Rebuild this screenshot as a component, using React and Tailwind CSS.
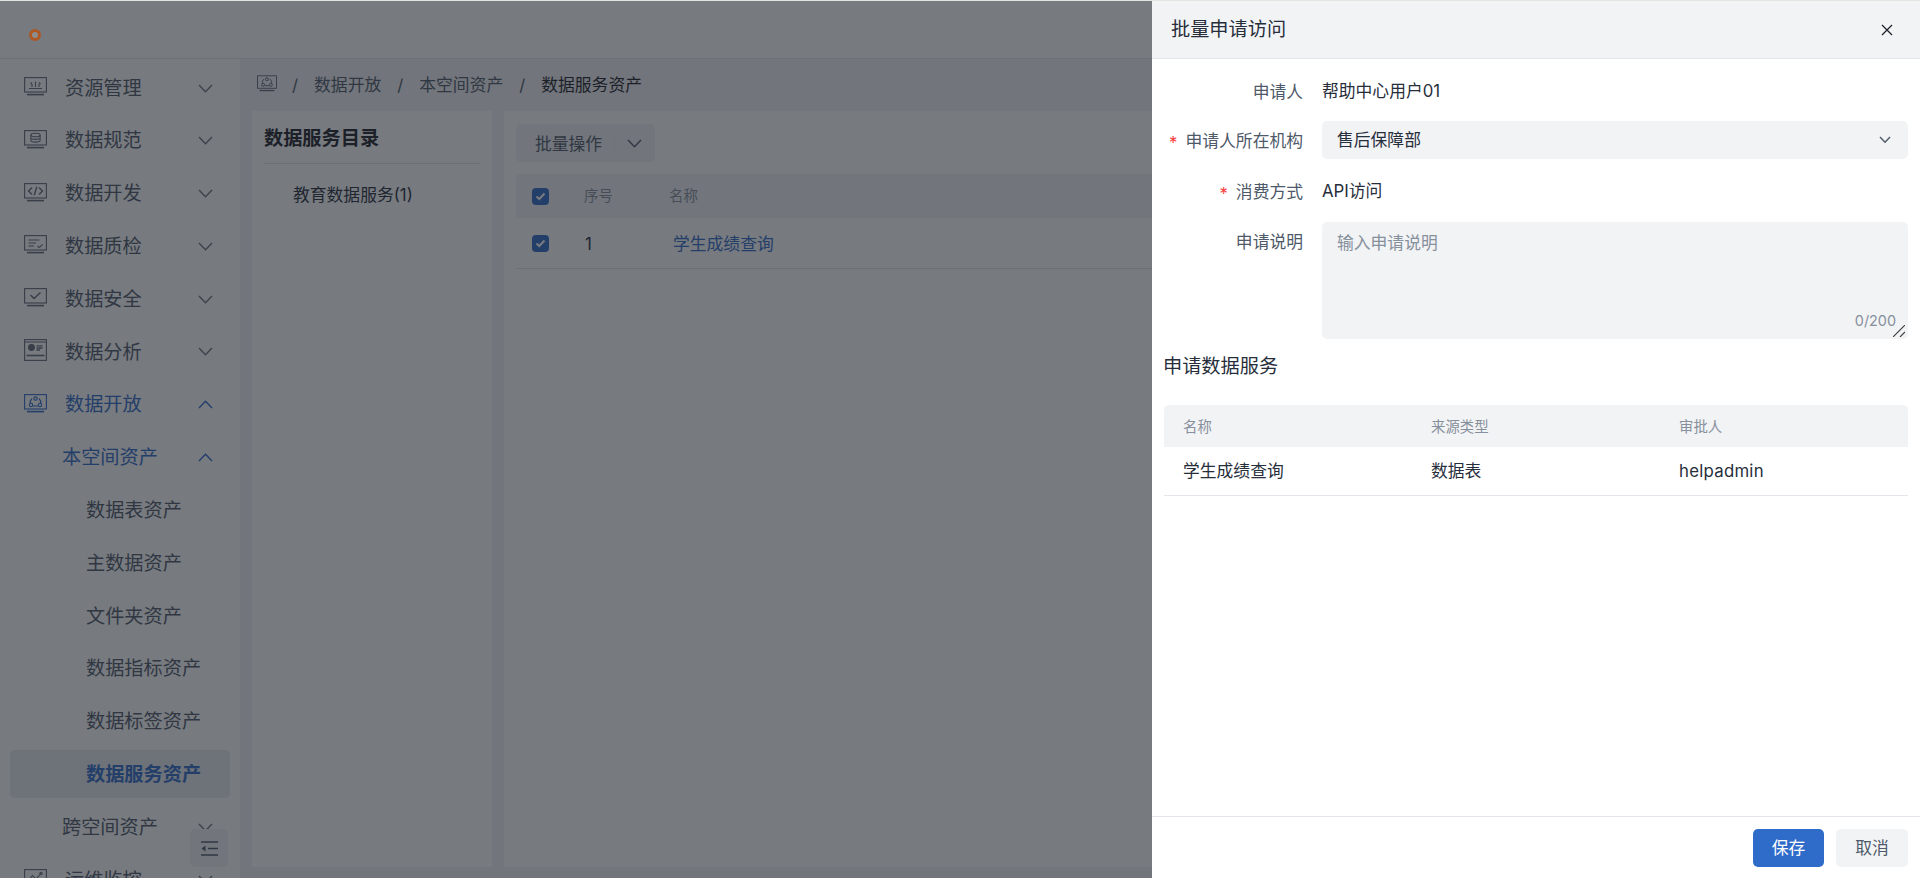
import React from "react";

const FONT = { fontFamily: 'Inter, "Noto Sans CJK SC", sans-serif' };

function Chevron({ up = false, w = 15, className = "" }) {
  const h = w / 2 + 1.5;
  const d = up ? `M1 ${h - 1} L${w / 2} 1.2 L${w - 1} ${h - 1}` : `M1 1 L${w / 2} ${h - 1.2} L${w - 1} 1`;
  return (
    <svg width={w} height={h} viewBox={`0 0 ${w} ${h}`} fill="none" stroke="currentColor" strokeWidth="1.4" className={className}>
      <path d={d} />
    </svg>
  );
}

function Screen({ children, className = "" }) {
  return (
    <svg width="23" height="19" viewBox="0 0 23 19" fill="none" stroke="currentColor" strokeWidth="1.1" className={className}>
      <rect x="0.6" y="0.6" width="21.8" height="14.4" />
      <path d="M3 17.6 H20" strokeWidth="1.6" />
      {children}
    </svg>
  );
}

function AnaIcon({ className = "" }) {
  return (
    <svg width="23" height="22" viewBox="0 0 23 22" fill="none" stroke="currentColor" strokeWidth="1.1" className={className}>
      <rect x="0.6" y="0.6" width="21.8" height="20.8" />
      <path d="M0.6 3 H22.4" strokeWidth="1" />
      <circle cx="7.5" cy="8.5" r="2.9" fill="currentColor" />
      <path d="M12.5 6.8 H18.5 M12.5 9 H18.5 M12.5 11 H16" strokeWidth="1.3" />
      <path d="M2.5 16.5 H20.5" strokeWidth="1.6" />
    </svg>
  );
}

const icons = {
  res: <path d="M5 11.5 H18 M8 10 V7 M11.5 10 V4.5 M15 10 V7 M6.5 7 L8 5.5 M16.5 7 L15 5.5" />,
  std: (
    <g>
      <ellipse cx="11.5" cy="5" rx="4.6" ry="1.8" />
      <path d="M6.9 5 V10.5 C6.9 12.6 16.1 12.6 16.1 10.5 V5 M6.9 7.8 C6.9 9.9 16.1 9.9 16.1 7.8" />
    </g>
  ),
  dev: <path d="M8 4.5 L4.5 8 L8 11.5 M15 4.5 L18.5 8 L15 11.5 M12.8 3.8 L10.2 12.2" strokeWidth="1.4" />,
  qa: <path d="M4.5 5 H15.5 M4.5 8 H12 M4.5 11 H10 M13.5 11 L15.2 12.6 L18.5 9.5" />,
  sec: <path d="M6.5 7 L10 10.5 L16.5 4.5" strokeWidth="1.5" />,
  open: (
    <g>
      <circle cx="11.5" cy="4.6" r="1.7" />
      <circle cx="7" cy="11" r="1.7" />
      <circle cx="16" cy="11" r="1.7" />
      <path d="M8 4.5 C6.5 6 6 7.5 6.3 9.4 M15 4.5 C16.5 6 17 7.5 16.7 9.4 M9 12 H14" />
    </g>
  ),
  ops: <path d="M3.5 12.5 L8.5 6.5 L12 10 L17 4.5 M17 4.5 m-1.2 0 a1.2 1.2 0 1 0 2.4 0 a1.2 1.2 0 1 0 -2.4 0" />,
};

function Row({ icon, label, open, active, indent, chevron = true, selected, strong }) {
  const iconClass = `ml-[14px] mr-[18px] shrink-0 ${active ? "text-[#2f6bc9]" : "text-[#626b78]"}`;
  return (
    <div
      className={`mx-[10px] h-[48px] shrink-0 rounded-[5px] flex items-center text-[19.2px] ${
        selected ? "bg-[#e9ebf0]" : ""
      } ${active ? "text-[#2f6bc9]" : "text-[#4e5969]"}`}
    >
      {icon === "ana" ? (
        <AnaIcon className={`${iconClass} -mt-[4px]`} />
      ) : icon ? (
        <Screen className={`${iconClass} -mt-[3px]`}>{icons[icon]}</Screen>
      ) : null}
      <span className={`${indent === 1 ? "ml-[52px]" : indent === 2 ? "ml-[76px]" : ""} ${strong ? "font-bold" : ""}`}>{label}</span>
      {chevron ? <Chevron up={open} className={`ml-auto mr-[17px] ${active ? "text-[#2f6bc9]" : "text-[#6b7480]"}`} /> : null}
    </div>
  );
}

function Box({ className = "" }) {
  return (
    <span className={`w-[17px] h-[17px] rounded-[4px] bg-[#2f6bc9] flex items-center justify-center shrink-0 ${className}`}>
      <svg width="11" height="9" viewBox="0 0 11 9" fill="none" stroke="white" strokeWidth="2">
        <path d="M1.5 4.5 L4.3 7 L9.5 1.5" />
      </svg>
    </span>
  );
}

function Label({ star, children, className = "" }) {
  return (
    <div className={`w-[139px] shrink-0 flex justify-end items-center text-[16.8px] text-[#4e5969] leading-[24px] ${className}`}>
      {star ? <span className="text-[#f53f3f] mr-[8px] mt-[3px]">*</span> : null}
      {children}
    </div>
  );
}

export default function App() {
  return (
    <div style={FONT} className="relative h-screen w-full overflow-hidden bg-white flex flex-col">
      <div className="h-px shrink-0 bg-[#e2e4e0]" />
      <header className="h-[58px] shrink-0 bg-white border-b border-[#e5e6eb] flex items-center pl-[29px]">
        <span className="relative z-50 w-[12px] h-[12px] mt-[11px] rounded-full bg-[#8c8e8d] border-[3px] border-[#ad5824]" />
      </header>
      <div className="flex-1 flex min-h-0">
        <aside className="relative w-[240px] shrink-0 bg-white overflow-hidden pt-[5px] flex flex-col gap-[4.8px]">
          <Row icon="res" label="资源管理" />
          <Row icon="std" label="数据规范" />
          <Row icon="dev" label="数据开发" />
          <Row icon="qa" label="数据质检" />
          <Row icon="sec" label="数据安全" />
          <Row icon="ana" label="数据分析" />
          <Row icon="open" label="数据开放" open active />
          <Row indent={1} label="本空间资产" open active />
          <Row indent={2} label="数据表资产" chevron={false} />
          <Row indent={2} label="主数据资产" chevron={false} />
          <Row indent={2} label="文件夹资产" chevron={false} />
          <Row indent={2} label="数据指标资产" chevron={false} />
          <Row indent={2} label="数据标签资产" chevron={false} />
          <Row indent={2} label="数据服务资产" chevron={false} selected active strong />
          <Row indent={1} label="跨空间资产" />
          <Row icon="ops" label="运维监控" />
          <div className="absolute left-[190px] bottom-[11px] w-[38px] h-[38px] rounded-[5px] bg-[#f2f3f5] flex items-center justify-center text-[#4e5969]">
            <svg width="17" height="15" viewBox="0 0 17 15" fill="none" stroke="currentColor" strokeWidth="1.6">
              <path d="M0 1 H17 M7 7.5 H17 M0 14 H17" />
              <path d="M4.5 4.5 L0.5 7.5 L4.5 10.5 Z" fill="currentColor" stroke="none" />
            </svg>
          </div>
        </aside>
        <main className="flex-1 min-w-0 bg-[#f2f3f5] flex flex-col">
          <nav className="h-[52px] shrink-0 flex items-center pl-[17px] pt-[2px] text-[16.8px] text-[#4e5969]">
            <Screen className="-mt-[6px] w-[20px] h-[17px] text-[#626b78]">{icons.open}</Screen>
            <span className="ml-[15px] mr-[16px]">/</span>
            <span>数据开放</span>
            <span className="mx-[16px]">/</span>
            <span>本空间资产</span>
            <span className="mx-[16px]">/</span>
            <span className="text-[#1d2129]">数据服务资产</span>
          </nav>
          <div className="flex-1 min-h-0 flex gap-[12px] pl-[12px] pr-[12px] pb-[11px]">
            <section className="w-[240px] shrink-0 bg-white px-[12px]">
              <div className="h-[53px] border-b border-[#e5e6eb] flex items-center pt-[2px] text-[19.2px] font-bold text-[#1d2129]">数据服务目录</div>
              <div className="mt-[19px] pl-[29px] text-[16.8px] leading-[24px] text-[#272e3b]">教育数据服务(1)</div>
            </section>
            <section className="flex-1 min-w-0 bg-white px-[12px] pt-[13px]">
              <div className="w-[139px] h-[38px] rounded-[5px] bg-[#f2f3f5] flex items-center pl-[19px] text-[16.8px] text-[#4e5969]">
                <span className="pt-[3px]">批量操作</span>
                <span className="w-px h-[22px] bg-[#eceef1] ml-[12px]" />
                <Chevron w={15} className="ml-[12px] text-[#4e5969]" />
              </div>
              <div className="mt-[12px] h-[44px] rounded-t-[5px] bg-[#f2f3f5] flex items-center pl-[16px] text-[14.4px] text-[#86909c]">
                <Box />
                <span className="ml-[35px] w-[85px]">序号</span>
                <span>名称</span>
              </div>
              <div className="h-[51px] border-b border-[#e5e6eb] flex items-center pl-[16px] text-[16.8px]">
                <Box className="mt-[1px]" />
                <span className="ml-[36px] w-[88px] pt-[4px] text-[#272e3b]">1</span>
                <span className="pt-[4px] text-[#2f6bc9]">学生成绩查询</span>
              </div>
            </section>
          </div>
        </main>
      </div>

      <div className="absolute inset-x-0 bottom-0 top-px bg-[rgba(29,33,41,0.6)]" />

      <aside className="absolute right-0 bottom-0 top-px w-[768px] bg-white flex flex-col">
        <div className="h-[58px] shrink-0 bg-[#f2f3f5] border-b border-[#e5e6eb] flex items-center pl-[19px] pr-[27px] text-[19.2px] text-[#272e3b]">
          <span>批量申请访问</span>
          <svg className="ml-auto" width="12" height="12" viewBox="0 0 12 12" fill="none" stroke="#1d2129" strokeWidth="1.3">
            <path d="M1 1 L11 11 M11 1 L1 11" />
          </svg>
        </div>
        <div className="flex-1 min-h-0 pl-[12px] pr-[12px] pt-[14px] flex flex-col">
          <div className="flex items-center h-[38px]">
            <Label>申请人</Label>
            <span className="ml-[19px] text-[16.8px] text-[#272e3b]">帮助中心用户01</span>
          </div>
          <div className="flex items-center h-[38px] mt-[10px]">
            <Label star className="pt-[2px]">申请人所在机构</Label>
            <div className="ml-[19px] flex-1 h-[38px] rounded-[5px] bg-[#f2f3f5] flex items-center pl-[15px] pr-[17px] text-[16.8px] text-[#272e3b]">
              <span className="pt-[2px]">售后保障部</span>
              <Chevron w={12} className="ml-auto text-[#4e5969]" />
            </div>
          </div>
          <div className="flex items-center h-[38px] mt-[14px]">
            <Label star>消费方式</Label>
            <span className="ml-[19px] text-[16.8px] text-[#272e3b]">API访问</span>
          </div>
          <div className="flex items-start mt-[11px]">
            <div className="pt-[8px]">
              <Label>申请说明</Label>
            </div>
            <div className="relative ml-[19px] flex-1 h-[117px]">
              <textarea
                readOnly
                placeholder="输入申请说明"
                style={FONT}
                className="block w-full h-full resize-none rounded-[5px] bg-[#f2f3f5] px-[15px] pt-[9px] pb-[7px] text-[16.8px] leading-[24px] placeholder:text-[#86909c] outline-none"
              />
              <span className="absolute right-[12px] bottom-[9px] text-[14.4px] leading-[18px] text-[#86909c]">0/200</span>
              <svg className="absolute right-[3px] bottom-[2px]" width="12" height="12" viewBox="0 0 12 12" fill="none" stroke="#3a3a3a" strokeWidth="1.1">
                <path d="M0 12 L12 0 M7 12 L12 7" />
              </svg>
            </div>
          </div>
          <div className="mt-[13px] -ml-px text-[19.2px] leading-[28px] text-[#272e3b]">申请数据服务</div>
          <div className="mt-[25px] h-[42px] rounded-t-[5px] bg-[#f2f3f5] grid grid-cols-3 items-center pt-[1px] text-[14.4px] text-[#86909c]">
            <span className="pl-[19px]">名称</span>
            <span className="pl-[19px]">来源类型</span>
            <span className="pl-[19px]">审批人</span>
          </div>
          <div className="h-[49px] border-b border-[#e5e6eb] grid grid-cols-3 items-center pt-[1px] text-[16.8px] text-[#272e3b]">
            <span className="pl-[19px]">学生成绩查询</span>
            <span className="pl-[19px]">数据表</span>
            <span className="pl-[19px] tracking-[0.25px]">helpadmin</span>
          </div>
        </div>
        <div className="h-[62px] shrink-0 border-t border-[#e5e6eb] flex justify-end items-start pt-[12px] pr-[12px] gap-[12px] text-[16.8px]">
          <button className="w-[71px] h-[38px] rounded-[5px] bg-[#2f6bc9] text-white pt-[1px]">保存</button>
          <button className="w-[72px] h-[38px] rounded-[5px] bg-[#f2f3f5] text-[#4e5969] pt-[1px]">取消</button>
        </div>
      </aside>
    </div>
  );
}
